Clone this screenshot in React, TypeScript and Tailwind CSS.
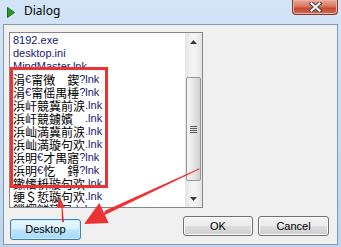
import React from "react";

type Seg = [string, boolean];

const rows: Seg[][] = [
  [["8192.exe", false]],
  [["desktop.ini", false]],
  [["MindMaster.lnk", false]],
  [["涓", true], ["€", false], ["甯徴　鍥", true], ["?lnk", false]],
  [["涓", true], ["€", false], ["甯傜禺棰", true], ["?lnk", false]],
  [["浜屽競冀前涙", true], [".lnk", false]],
  [["浜屽競鐪嬪　", true], [".lnk", false]],
  [["浜屾満冀前涙", true], [".lnk", false]],
  [["浜屾満璇句欢", true], [".lnk", false]],
  [["浜明", true], ["€", false], ["才禺寤", true], ["?lnk", false]],
  [["浜明", true], ["€", false], ["忔　鍀", true], ["?lnk", false]],
  [["鏉愭枡璇句欢", true], [".lnk", false]],
  [["绠＄悊璇句欢", true], [".lnk", false]],
  [["鏁欏鐩稿叧", true], [".lnk", false]],
];

const latin = "font-['Liberation_Sans',sans-serif]";
const cjk = "font-['Noto_Sans_CJK_SC','Noto_Sans',sans-serif]";

function Row({ segs }: { segs: Seg[] }) {
  return (
    <div className="flex h-[13px] items-center whitespace-nowrap">
      {segs.map(([t, isC], i) =>
        isC ? (
          <span key={i} className={`${cjk} text-[12px] leading-[13px] text-black`}>
            {t}
          </span>
        ) : (
          <span key={i} className={`${latin} text-[11px] leading-[13px] text-[#18206a]`}>
            {t}
          </span>
        )
      )}
    </div>
  );
}

function Button({ label, w, h, hot }: { label: string; w: string; h: string; hot?: boolean }) {
  return (
    <div
      className={`${w} ${h} flex items-center justify-center rounded-[3px] border ${latin} text-[11px] text-black ${
        hot
          ? "border-[#3c7fb1] bg-[linear-gradient(to_bottom,#eaf6fd_0%,#d9f0fc_50%,#bee6fd_50%,#a7d9f5_100%)] shadow-[inset_0_0_0_1px_#c8ebfc]"
          : "border-[#707070] bg-[linear-gradient(to_bottom,#f2f2f2_0%,#ebebeb_50%,#dddddd_50%,#cfcfcf_100%)] shadow-[inset_0_0_0_1px_#fbfbfb]"
      }`}
    >
      {label}
    </div>
  );
}

export default function App() {
  return (
    <div className="relative flex h-[247px] w-[341px] flex-col overflow-hidden bg-[linear-gradient(to_bottom,#d3e4f7,#bdd5ee)]">
      {/* Title bar */}
      <div className="flex h-[24px] items-start">
        <svg className="ml-[7px] mt-[7px]" width="8" height="11" viewBox="0 0 8 11">
          <polygon points="0.5,0.5 7.5,5.5 0.5,10.5" fill="#2f9a24" stroke="#1f6e18" strokeWidth="1" />
        </svg>
        <span className="ml-[9px] mt-[3px] font-['Noto_Sans',sans-serif] text-[12px] leading-[16px] text-black">
          Dialog
        </span>
        <div className="ml-auto mr-[3px] flex h-[15px] w-[46px] items-center justify-center rounded-b-[4px] border border-t-0 border-[#7d3a30] bg-[linear-gradient(to_bottom,#e9a896_0%,#d9775f_45%,#c54a34_60%,#d26a52_100%)] shadow-[inset_0_0_0_1px_#eeb0a0]">
          <svg width="13" height="10" viewBox="0 0 13 10">
            <path d="M2.5 1.5 L10.5 8.5 M10.5 1.5 L2.5 8.5" stroke="#4b4b4b" strokeWidth="4.2" strokeLinecap="square" />
            <path d="M2.5 1.5 L10.5 8.5 M10.5 1.5 L2.5 8.5" stroke="#f4f4f4" strokeWidth="2.2" strokeLinecap="square" />
          </svg>
        </div>
      </div>

      {/* Client area */}
      <div className="mx-[3px] flex h-[221px] flex-col border border-[#8797ad] bg-[#f0f0f0]">
        <div className="ml-[5px] mt-[7px] flex h-[176px] w-[194px] border border-[#828790] bg-white">
          <div className="flex-1 overflow-hidden pl-[3px] pt-[1px]">
            {rows.map((r, i) => (
              <Row key={i} segs={r} />
            ))}
          </div>
          <div className="flex w-[17px] flex-col bg-[linear-gradient(to_right,#e4e4e4,#f3f3f3_40%,#f3f3f3_60%,#e4e4e4)]">
            <div className="flex h-[17px] items-center justify-center">
              <svg width="7" height="4" viewBox="0 0 7 4">
                <polygon points="3.5,0 7,4 0,4" fill="#3a3a3a" />
              </svg>
            </div>
            <div className="flex flex-1 flex-col">
              <div className="mx-[1px] mt-[27px] flex h-[104px] items-center justify-center rounded-[2px] border border-[#979797] bg-[linear-gradient(to_right,#f6f6f6,#e6e6e6_50%,#d0d0d0)]">
                <div className="flex w-[7px] flex-col gap-[1px]">
                  <div className="h-[1px] bg-[#5a5a5a]" />
                  <div className="h-[1px] bg-[#5a5a5a]" />
                  <div className="h-[1px] bg-[#5a5a5a]" />
                  <div className="h-[1px] bg-[#5a5a5a]" />
                </div>
              </div>
            </div>
            <div className="flex h-[17px] items-center justify-center">
              <svg width="7" height="4" viewBox="0 0 7 4">
                <polygon points="0,0 7,0 3.5,4" fill="#3a3a3a" />
              </svg>
            </div>
          </div>
        </div>

        <div className="mt-[8px] flex items-start">
          <div className="ml-[6px] mt-[3px]">
            <Button label="Desktop" w="w-[71px]" h="h-[21px]" hot />
          </div>
          <div className="ml-auto mr-[8px] flex gap-[5px]">
            <Button label="OK" w="w-[70px]" h="h-[20px]" />
            <Button label="Cancel" w="w-[71px]" h="h-[20px]" />
          </div>
        </div>
      </div>

      {/* Red highlight box */}
      <div className="pointer-events-none absolute left-[10px] top-[67px] h-[121px] w-[98px] border-[3px] border-[#ec3333]" />

      {/* Arrows */}
      <svg className="pointer-events-none absolute left-0 top-0" width="341" height="247" viewBox="0 0 341 247">
        <polygon
          points="199.5,168.3 199.5,169.3 102.7,216 105.3,210.4"
          fill="#ec3333"
        />
        <polygon points="99.3,203.1 108.7,222.9 84.1,224" fill="#ec3333" />
        <polygon points="61.5,207 62.5,207 64,222 62,222" fill="#ec3333" />
        <polygon points="60,197 64.5,207.5 56.5,207.5" fill="#ec3333" />
      </svg>
    </div>
  );
}
